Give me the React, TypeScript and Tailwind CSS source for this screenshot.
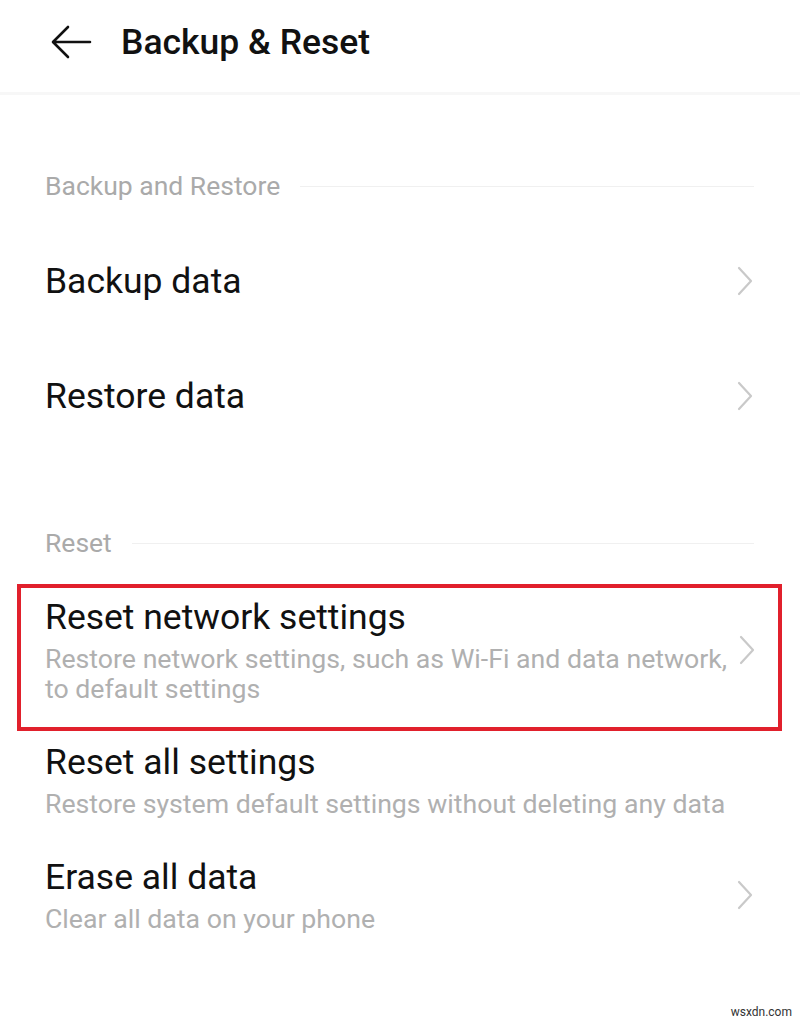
const font = { fontFamily: 'Roboto, "Liberation Sans", sans-serif' };

function Chevron() {
  return (
    <svg width="18" height="32" viewBox="0 0 18 32" fill="none" className="shrink-0">
      <path d="M3 3 L15 16 L3 29" stroke="#c9c9c9" strokeWidth="2.2" strokeLinecap="round" strokeLinejoin="round" />
    </svg>
  );
}

function SectionHeader({ title }: { title: string }) {
  return (
    <div className="flex items-center gap-5 h-[32px]">
      <span className="text-[26.5px] leading-[32px] text-[#aaaaaa] whitespace-nowrap">{title}</span>
      <div className="flex-1 h-px bg-[#f0f0f0]" />
    </div>
  );
}

function Row({ title, subtitle, chevron = true }: { title: string; subtitle?: string[]; chevron?: boolean }) {
  return (
    <div className="flex items-center">
      <div className="flex-1 min-w-0 flex flex-col gap-[6px]">
        <div className="text-[35.5px] leading-[42px] text-[#111]">{title}</div>
        {subtitle && (
          <div className="text-[26.7px] leading-[30px] text-[#b0b0b0] whitespace-nowrap">
            {subtitle.map((line) => (
              <div key={line}>{line}</div>
            ))}
          </div>
        )}
      </div>
      {chevron ? <Chevron /> : <div className="w-[18px]" />}
    </div>
  );
}

export default function App() {
  return (
    <div className="w-[800px] h-[1023px] bg-white relative overflow-hidden" style={font}>
      {/* Header */}
      <header className="h-[95px] flex items-start pt-[20px] pl-[50px] gap-[27px] border-b-[3px] border-[#f7f7f7]">
        <svg width="44" height="44" viewBox="0 0 44 44" fill="none">
          <path d="M40 22 H4 M18 7 L3 22 L18 37" stroke="#111" strokeWidth="2.6" strokeLinecap="round" strokeLinejoin="round" />
        </svg>
        <h1 className="text-[35.5px] leading-[44px] font-medium text-[#111]">Backup &amp; Reset</h1>
      </header>

      <div className="pl-[45px] pr-[46px]">
        <div className="mt-[75px]">
          <SectionHeader title="Backup and Restore" />
        </div>

        <div className="mt-[21px] h-[115px] flex flex-col justify-center">
          <Row title="Backup data" />
        </div>
        <div className="h-[115px] flex flex-col justify-center">
          <Row title="Restore data" />
        </div>

        <div className="mt-[74px]">
          <SectionHeader title="Reset" />
        </div>

        <div className="mt-[25px] -mx-[28px] border-4 border-[#e1202c] pl-[24px] pr-[22px] pt-[8px] pb-[23px]">
          <Row
            title="Reset network settings"
            subtitle={['Restore network settings, such as Wi-Fi and data network,', 'to default settings']}
          />
        </div>

        <div className="mt-[10px]">
          <Row title="Reset all settings" subtitle={['Restore system default settings without deleting any data']} chevron={false} />
        </div>

        <div className="mt-[37px]">
          <Row title="Erase all data" subtitle={['Clear all data on your phone']} />
        </div>
      </div>

      <div className="absolute right-[8px] bottom-[2px] text-[12px] text-[#333]">wsxdn.com</div>
    </div>
  );
}
